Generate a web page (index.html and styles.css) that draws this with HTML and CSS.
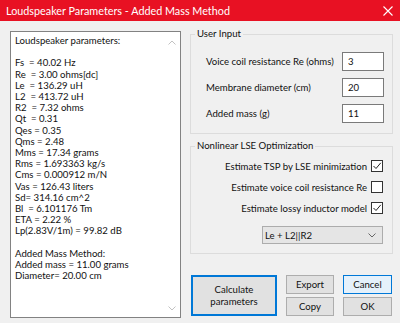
FILE: index.html
```html
<!DOCTYPE html>
<html>
<head>
<meta charset="utf-8">
<title>Loudspeaker Parameters - Added Mass Method</title>
<link rel="stylesheet" href="styles.css">
</head>
<body>
<div class="window">
  <div class="titlebar">
    <span class="title">Loudspeaker Parameters - Added Mass Method</span>
    <svg class="close" width="10" height="10" viewBox="0 0 10 10"><path d="M0.5 0.5L9.5 9.5M9.5 0.5L0.5 9.5" stroke="#fff" stroke-width="1.1" fill="none"/></svg>
  </div>
  <div class="client">
    <div class="output">
<pre class="report">Loudspeaker parameters:

Fs  = 40.02 Hz
Re  = 3.00 ohms[dc]
Le  = 136.29 uH
L2  = 413.72 uH
R2  = 7.32 ohms
Qt  = 0.31
Qes = 0.35
Qms = 2.48
Mms = 17.34 grams
Rms = 1.693363 kg/s
Cms = 0.000912 m/N
Vas = 126.43 liters
Sd= 314.16 cm^2
Bl  = 6.101176 Tm
ETA = 2.22 %
Lp(2.83V/1m) = 99.82 dB

Added Mass Method:
Added mass = 11.00 grams
Diameter= 20.00 cm</pre>
      <div class="scrollbar">
        <svg width="8" height="5" viewBox="0 0 8 5"><path d="M0.5 4.5L4 1L7.5 4.5" stroke="#C2C2C2" fill="none"/></svg>
        <svg width="8" height="5" viewBox="0 0 8 5"><path d="M0.5 0.5L4 4L7.5 0.5" stroke="#C2C2C2" fill="none"/></svg>
      </div>
    </div>
    <div class="side">
      <fieldset class="group user">
        <legend>User Input</legend>
        <div class="field"><span>Voice coil resistance Re (ohms)</span><input class="num" value="3"></div>
        <div class="field"><span>Membrane diameter (cm)</span><input class="num" value="20"></div>
        <div class="field"><span>Added mass (g)</span><input class="num" value="11"></div>
      </fieldset>
      <fieldset class="group lse">
        <legend>Nonlinear LSE Optimization</legend>
        <div class="check"><span>Estimate TSP by LSE minimization</span><span class="box"><svg width="10" height="10" viewBox="0 0 10 10"><path d="M1.5 5L4 7.5L8.8 1.8" stroke="#222" stroke-width="1" fill="none"/></svg></span></div>
        <div class="check"><span>Estimate voice coil resistance Re</span><span class="box"></span></div>
        <div class="check"><span>Estimate lossy inductor model</span><span class="box"><svg width="10" height="10" viewBox="0 0 10 10"><path d="M1.5 5L4 7.5L8.8 1.8" stroke="#222" stroke-width="1" fill="none"/></svg></span></div>
        <div class="select"><span>Le + L2||R2</span><svg width="8" height="5" viewBox="0 0 8 5"><path d="M0.5 0.5L4 4L7.5 0.5" stroke="#666" fill="none"/></svg></div>
      </fieldset>
      <div class="buttons">
        <button class="btn calc">Calculate<br>parameters</button>
        <button class="btn">Export</button>
        <button class="btn cancel">Cancel</button>
        <button class="btn">Copy</button>
        <button class="btn">OK</button>
      </div>
    </div>
  </div>
</div>
</body>
</html>
```

FILE: styles.css
```css
* { box-sizing: border-box; }
html, body { margin: 0; padding: 0; }
body {
  width: 400px;
  height: 323px;
  overflow: hidden;
  background: #F0F0F0;
  font-family: Lato, "Liberation Sans", sans-serif;
  font-size: 9.6px;
  color: #111;
}
.titlebar {
  height: 21px;
  background: #E81123;
  color: #fff;
  display: flex;
  align-items: center;
  justify-content: space-between;
  padding: 0 7px 0 6px;
}
.title { font-size: 10.8px; }
.close { display: block; }
.client {
  display: flex;
  align-items: flex-start;
  padding: 10px 0 0 10px;
}
.output {
  width: 171px;
  height: 287px;
  border: 1px solid #828282;
  background: #fff;
  display: flex;
}
.report {
  margin: 0;
  flex: 1;
  padding: 3px 0 0 4px;
  font-family: Lato, "Liberation Sans", sans-serif;
  font-size: 9.6px;
  line-height: 11.2px;
  white-space: pre;
  overflow: hidden;
}
.scrollbar {
  width: 17px;
  display: flex;
  flex-direction: column;
  justify-content: space-between;
  align-items: center;
  padding: 8px 0 6px;
}
.scrollbar svg { display: block; }
.side {
  margin: -3px 0 0 9px;
  width: 203px;
  display: flex;
  flex-direction: column;
}
.group {
  margin: 0;
  min-width: 0;
  border: 1px solid #DCDCDC;
  padding: 12px 8px 10px 4px;
}
.group legend {
  padding: 0 2px;
  font-size: 9.6px;
  line-height: 12px;
}
.user { display: flex; flex-direction: column; gap: 7px; }
.field {
  display: flex;
  align-items: center;
  justify-content: space-between;
  padding-left: 11px;
  height: 19px;
}
.num {
  width: 42px;
  height: 19px;
  border: 1px solid #7A7A7A;
  background: #fff;
  padding: 0 0 0 5px;
  font-family: Lato, "Liberation Sans", sans-serif;
  font-size: 9.6px;
  color: #111;
  outline: none;
}
.lse {
  margin-top: 6px;
  padding: 7px 9px 9px 4px;
  display: flex;
  flex-direction: column;
  gap: 7px;
}
.check {
  display: flex;
  align-items: center;
  justify-content: flex-end;
  gap: 4px;
  height: 14px;
}
.box {
  width: 12px;
  height: 12px;
  border: 1px solid #333;
  background: #fff;
  display: flex;
  align-items: center;
  justify-content: center;
}
.box svg { display: block; }
.select {
  align-self: flex-end;
  margin-top: 4px;
  width: 121px;
  height: 18px;
  background: #E5E5E5;
  border: 1px solid #ACACAC;
  display: flex;
  align-items: center;
  justify-content: space-between;
  padding: 0 6px 0 2px;
}
.select svg { display: block; }
.buttons {
  margin: 21px 0 0 1px;
  display: grid;
  grid-template-columns: 86px 48px 49px;
  grid-template-rows: 19px 19px;
  column-gap: 9px;
  row-gap: 3px;
}
.btn {
  margin: 0;
  padding: 0;
  background: #E1E1E1;
  border: 1px solid #ADADAD;
  font-family: Lato, "Liberation Sans", sans-serif;
  font-size: 9.6px;
  line-height: 12px;
  color: #111;
}
.calc {
  grid-row: 1 / 3;
  border: 2px solid #0078D7;
}
.cancel {
  background: #E5F1FB;
  border-color: #0078D7;
}
```
